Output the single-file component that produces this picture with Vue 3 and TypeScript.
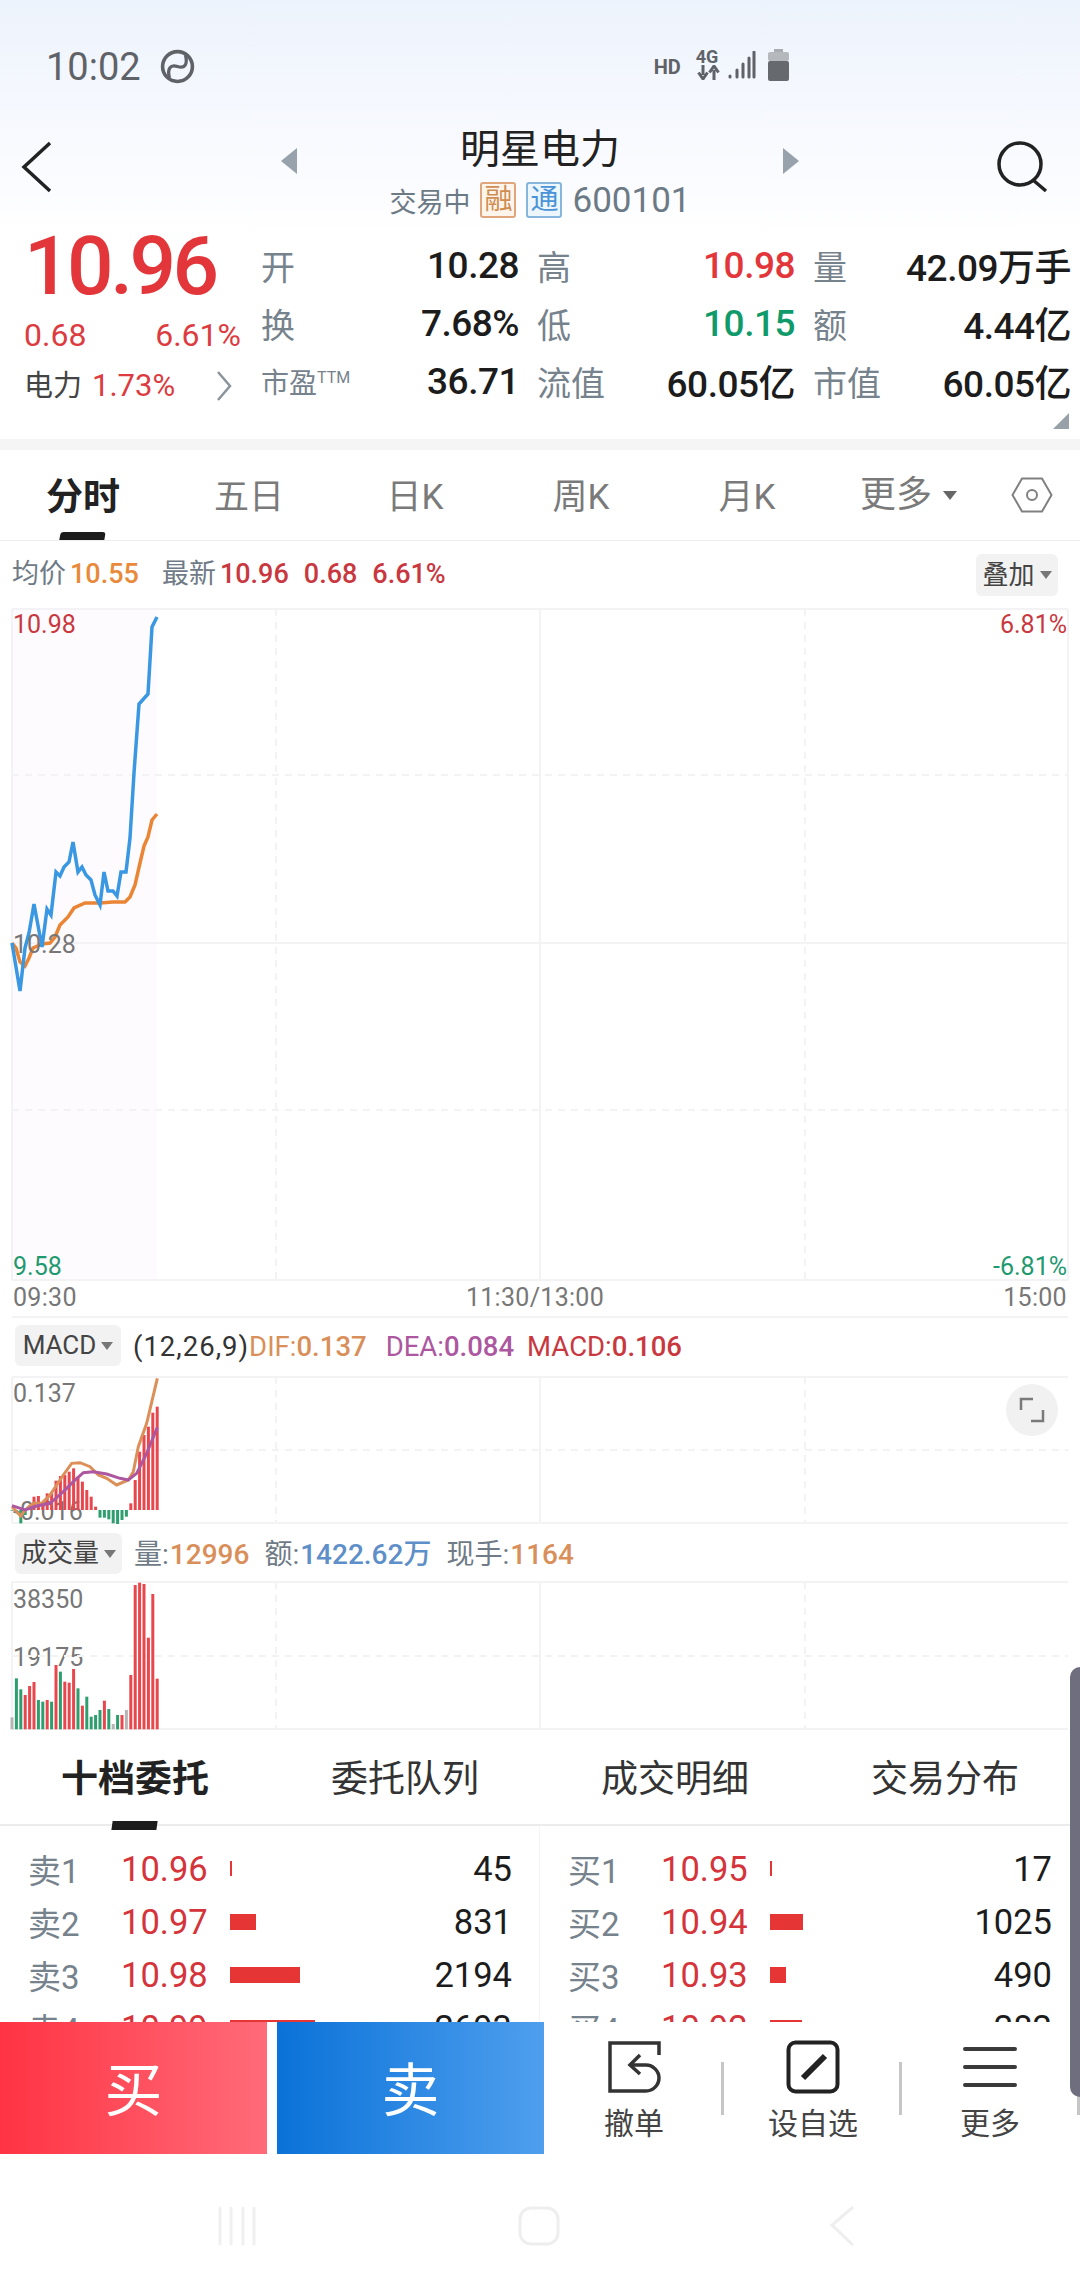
<template>
  <div class="page">
    <div class="hero">
      <div class="status">
        <span class="clock">10:02</span>
        <svg class="dnd" viewBox="0 0 34 34" width="35" height="35">
          <circle cx="17" cy="17" r="14.5" fill="none" stroke="#5f6368" stroke-width="3.5" />
          <path d="M4 21c4-9 9-10 13-4s9 5 13-4" transform="rotate(-38 17 17)" fill="none" stroke="#5f6368" stroke-width="3.2" />
        </svg>
        <div class="status-right">
          <span class="hd">HD</span>
          <div class="net">
            <span>4G</span>
            <svg viewBox="0 0 25 15" width="25" height="15">
              <path d="M7 0v10M2.5 7.5 7 14l4.500-6.500M18 15V5M13.500 7.500 18 1l4.500 6.500" fill="none" stroke="#5f6368" stroke-width="3" />
            </svg>
          </div>
          <svg class="signal" viewBox="0 0 28 28" width="28" height="28">
            <path d="M2 25v1M9 19v7M15 13v13M21 7v19M26 1v25" stroke="#5f6368" stroke-width="3" stroke-linecap="round" />
          </svg>
          <svg class="battery" viewBox="0 0 21 32" width="21" height="32">
            <rect x="6" y="0" width="9" height="4" fill="#a9adb2" />
            <rect x="0" y="3" width="21" height="9" rx="2" fill="#b5b8bc" />
            <rect x="0" y="12" width="21" height="20" rx="2" fill="#66696d" />
          </svg>
        </div>
      </div>

      <div class="nav">
        <svg class="back" viewBox="0 0 34 54" width="34" height="54">
          <path d="M30 3 4 27l26 24" fill="none" stroke="#222" stroke-width="3.500" />
        </svg>
        <div class="nav-mid">
          <i class="tri-left"></i>
          <div class="title-box">
            <div class="title">明星电力</div>
            <div class="subtitle">
              <span>交易中</span>
              <em class="tag tag-rong">融</em>
              <em class="tag tag-tong">通</em>
              <span class="code">600101</span>
            </div>
          </div>
          <i class="tri-right"></i>
        </div>
        <svg class="search" viewBox="0 0 56 54" width="56" height="54">
          <circle cx="25" cy="24" r="21" fill="none" stroke="#222" stroke-width="3.500" />
          <path d="m38 40 13 11" stroke="#222" stroke-width="3.500" />
        </svg>
      </div>

      <div class="stats">
        <div class="quote">
          <div class="price">10.96</div>
          <div class="change"><span>0.68</span><span>6.61%</span></div>
          <div class="sector">
            <span class="sector-name">电力</span>
            <span class="sector-val">1.73%</span>
            <svg viewBox="0 0 16 32" width="16" height="32">
              <path d="m2 2 12 14L2 30" fill="none" stroke="#8a949c" stroke-width="2.500" />
            </svg>
          </div>
        </div>
        <div class="stat-grid">
          <div v-for="s in stats" :key="s.label" class="stat">
            <span class="stat-label">{{ s.label }}<sup v-if="s.sup">{{ s.sup }}</sup></span>
            <span class="stat-val" :class="s.cls">{{ s.value }}</span>
          </div>
        </div>
        <i class="corner"></i>
      </div>
    </div>
    <div class="band"></div>

    <div class="tabs">
      <div v-for="(t, i) in tabs" :key="t" class="tab" :class="{ on: i === 0 }">{{ t }}</div>
      <div class="tab-more">更多<i class="caret"></i></div>
      <svg class="hex" viewBox="0 0 42 36" width="42" height="36">
        <path d="M11 1.500h20L40.500 18 31 34.500H11L1.500 18z" fill="none" stroke="#808080" stroke-width="2" />
        <circle cx="21" cy="18" r="5" fill="none" stroke="#808080" stroke-width="2" />
      </svg>
    </div>

    <div class="info-row">
      <span class="muted">均价</span><b class="orange">10.55</b>
      <span class="muted latest">最新</span><b class="red">10.96</b><b class="red">0.68</b><b class="red">6.61%</b>
      <div class="pill overlay-pill">叠加<i class="caret small"></i></div>
    </div>

    <div class="chart main-chart">
      <svg viewBox="0 605 1080 677" width="1080" height="677">
        <rect x="12" y="609" width="145" height="671" fill="#fefbfe" />
        <path d="M12 609h1056M12 943h1056M12 1280h1056M12 609v671M540 609v671M1068 609v671" stroke="#f3f3f5" stroke-width="2" fill="none" />
        <path d="M12 775h1056M12 1110h1056M276 609v671M805 609v671" stroke="#f3f3f3" stroke-width="2" stroke-dasharray="7 6" fill="none" />
        <polyline :points="pts(avgLine)" fill="none" stroke="#e98535" stroke-width="3.500" />
        <polyline :points="pts(priceLine)" fill="none" stroke="#3a97e2" stroke-width="3.500" />
      </svg>
      <span class="lbl red-lbl l-high">10.98</span>
      <span class="lbl l-base">10.28</span>
      <span class="lbl green-lbl l-low">9.58</span>
      <span class="lbl red-lbl r-high">6.81%</span>
      <span class="lbl green-lbl r-low">-6.81%</span>
    </div>
    <div class="axis">
      <span>09:30</span><span>11:30/13:00</span><span>15:00</span>
    </div>

    <div class="ind-row">
      <div class="pill ind-pill macd-pill">MACD<i class="caret small"></i></div>
      <span class="dark">(12,26,9)</span>
      <span class="c-dif">DIF:<b>0.137</b></span>
      <span class="c-dea">DEA:<b>0.084</b></span>
      <span class="c-macd">MACD:<b>0.106</b></span>
    </div>
    <div class="chart macd-chart">
      <span class="lbl m-top">0.137</span>
      <span class="lbl m-bot">-0.016</span>
      <svg viewBox="0 1374 1080 152" width="1080" height="152">
        <path d="M12 1377h1056M12 1523h1056M12 1377v146M540 1377v146" stroke="#f3f3f5" stroke-width="2" fill="none" />
        <path d="M12 1450h1056M276 1377v146M805 1377v146" stroke="#f3f3f3" stroke-width="2" stroke-dasharray="7 6" fill="none" />
        <rect v-for="b in macdBars" :key="b.x" :x="b.x - 1.500" :y="b.y" width="3" :height="b.h" :fill="b.color" />
        <polyline :points="pts(difLine)" fill="none" stroke="#dc8f58" stroke-width="3" />
        <polyline :points="pts(deaLine)" fill="none" stroke="#ac57a0" stroke-width="3" />
      </svg>
      <div class="expand">
        <svg viewBox="0 0 26 26" width="26" height="26">
          <path d="M2 13V2h12M24 13v11H12" fill="none" stroke="#7a7a7a" stroke-width="2.500" />
        </svg>
      </div>
    </div>

    <div class="ind-row vol-row">
      <div class="pill ind-pill vol-pill">成交量<i class="caret small"></i></div>
      <span class="muted">量:</span><b class="c-amt">12996</b>
      <span class="muted gap-l">额:</span><b class="c-blue">1422.62万</b>
      <span class="muted gap-l">现手:</span><b class="c-amt">1164</b>
    </div>
    <div class="chart vol-chart">
      <span class="lbl v-top">38350</span>
      <span class="lbl v-mid">19175</span>
      <svg viewBox="0 1579 1080 153" width="1080" height="153">
        <path d="M12 1582h1056M12 1729h1056M12 1582v147M540 1582v147" stroke="#f3f3f5" stroke-width="2" fill="none" />
        <path d="M12 1656h1056M276 1582v147M805 1582v147" stroke="#f3f3f3" stroke-width="2" stroke-dasharray="7 6" fill="none" />
        <rect v-for="b in volBars" :key="b.x" :x="b.x - 1.500" :y="b.y" width="3" :height="b.h" :fill="b.color" />
      </svg>
    </div>

    <div class="book-tabs">
      <div v-for="(t, i) in bookTabs" :key="t" class="book-tab" :class="{ on: i === 0 }">{{ t }}</div>
    </div>
    <div class="book">
      <div class="book-col">
        <div v-for="r in asks" :key="r.label" class="book-row">
          <span class="muted-lbl">{{ r.label }}</span>
          <span class="book-price">{{ r.price }}</span>
          <span class="bar-cell"><i :style="{ width: r.w + 'px', height: r.h + 'px' }"></i></span>
          <span class="book-qty">{{ r.qty }}</span>
        </div>
      </div>
      <div class="book-col right">
        <div v-for="r in bids" :key="r.label" class="book-row">
          <span class="muted-lbl">{{ r.label }}</span>
          <span class="book-price">{{ r.price }}</span>
          <span class="bar-cell"><i :style="{ width: r.w + 'px', height: r.h + 'px' }"></i></span>
          <span class="book-qty">{{ r.qty }}</span>
        </div>
      </div>
    </div>

    <div class="actions">
      <div class="btn buy">买</div>
      <div class="btn sell">卖</div>
      <div class="tools">
        <div class="tool">
          <svg viewBox="0 0 54 52" width="54" height="52">
            <path d="M52 14V2H3v48h36c7 0 13-6 13-13s-6-13-13-13H24" fill="none" stroke="#333" stroke-width="3.500" />
            <path d="m33 14-10 10 10 9" fill="none" stroke="#333" stroke-width="3.500" />
          </svg>
          <span>撤单</span>
        </div>
        <div class="tool">
          <svg viewBox="0 0 54 54" width="54" height="54">
            <rect x="2.500" y="2.500" width="49" height="49" rx="7" fill="none" stroke="#222" stroke-width="4" />
            <path d="M39 16 17 38" stroke="#222" stroke-width="6" />
          </svg>
          <span>设自选</span>
        </div>
        <div class="tool">
          <svg viewBox="0 0 54 54" width="54" height="54">
            <path d="M2 9h50M2 27h50M2 45h50" stroke="#3a3a3a" stroke-width="4" stroke-linecap="round" />
          </svg>
          <span>更多</span>
        </div>
      </div>
    </div>

    <div class="sysnav">
      <svg viewBox="0 0 40 40" width="40" height="40">
        <path d="M3 2v36M14 2v36M26 2v36M37 2v36" stroke="#f0f0f0" stroke-width="3" stroke-linecap="round" />
      </svg>
      <svg viewBox="0 0 42 40" width="42" height="40">
        <rect x="2" y="2" width="38" height="36" rx="11" fill="none" stroke="#eeeeee" stroke-width="3" />
      </svg>
      <svg viewBox="0 0 24 40" width="24" height="40">
        <path d="M23 1 2 19l21 20" fill="none" stroke="#eeeeee" stroke-width="3" />
      </svg>
    </div>

    <div class="scrollbar"></div>
  </div>
</template>

<script setup lang="ts">
type Pt = [number, number]

const stats = [
  { label: '开', value: '10.28' },
  { label: '高', value: '10.98', cls: 'up' },
  { label: '量', value: '42.09万手' },
  { label: '换', value: '7.68%' },
  { label: '低', value: '10.15', cls: 'down' },
  { label: '额', value: '4.44亿' },
  { label: '市盈', sup: 'TTM', value: '36.71' },
  { label: '流值', value: '60.05亿' },
  { label: '市值', value: '60.05亿' },
]

const tabs = ['分时', '五日', '日K', '周K', '月K']
const bookTabs = ['十档委托', '委托队列', '成交明细', '交易分布']

const asks = [
  { label: '卖1', price: '10.96', w: 2, h: 15, qty: '45' },
  { label: '卖2', price: '10.97', w: 26, h: 16, qty: '831' },
  { label: '卖3', price: '10.98', w: 70, h: 16, qty: '2194' },
  { label: '卖4', price: '10.99', w: 85, h: 16, qty: '2693' },
]
const bids = [
  { label: '买1', price: '10.95', w: 2, h: 15, qty: '17' },
  { label: '买2', price: '10.94', w: 33, h: 16, qty: '1025' },
  { label: '买3', price: '10.93', w: 16, h: 16, qty: '490' },
  { label: '买4', price: '10.92', w: 32, h: 16, qty: '282' },
]

const pts = (line: Pt[]) => line.map(p => p.join(',')).join(' ')

const priceLine: Pt[] = [
  [12, 943], [20, 991], [25, 948], [29, 933], [34, 904], [42, 947], [47, 909], [51, 915],
  [56, 872], [60, 876], [64, 867], [69, 862], [73, 842], [78, 872], [82, 867], [86, 875],
  [91, 880], [95, 895], [100, 905], [104, 872], [108, 891], [113, 891], [117, 896], [121, 872],
  [126, 872], [130, 838], [134, 773], [139, 704], [148, 694], [152, 627], [157, 617],
]
const avgLine: Pt[] = [
  [12, 943], [16, 948], [20, 962], [25, 966], [29, 958], [33, 948], [42, 944], [50, 943],
  [55, 937], [60, 925], [68, 917], [74, 908], [85, 903], [100, 903], [113, 902], [125, 902],
  [130, 897], [135, 885], [140, 863], [144, 846], [148, 837], [152, 820], [157, 814],
]

// zoomed-in readings of the indicator panes: x * 3, (y - 1340) * 3
const fromCrop = (list: Pt[]): Pt[] => list.map(([x, y]) => [x / 3, 1340 + y / 3])

const difLine = fromCrop([
  [36, 500], [50, 515], [62, 528], [75, 510], [100, 490], [125, 490], [150, 465], [170, 435],
  [190, 405], [215, 370], [240, 368], [270, 380], [295, 405], [320, 415], [350, 435], [385, 420],
  [400, 395], [415, 320], [440, 250], [472, 115],
])
const deaLine = fromCrop([
  [36, 497], [75, 510], [110, 498], [150, 490], [190, 455], [220, 425], [250, 398], [280, 395],
  [320, 402], [360, 415], [385, 420], [410, 400], [440, 340], [472, 262],
])

const barX = (i: number) => 12 + i * 4.4

const macdTops = [
  512, 520, 550, 525, 495, 470, 468, 490, 460, 460, 422, 408, 405, 395, 385, 410, 425, 450, 470, 500,
  533, 533, 538, 550, 552, 540, 530, 490, 420, 335, 285, 260, 218, 200,
]
const macdBars = macdTops.map((top, i) => {
  const zero = 1510
  const y = 1340 + top / 3
  return {
    x: barX(i),
    y: Math.min(y, zero),
    h: Math.abs(y - zero),
    color: y > zero ? '#2f9e6e' : '#e8484d',
  }
})

const R = '#e8484d'
const G = '#2f9e6e'
const N = '#b5b5b5'
const volData: [number, string][] = [
  [1132, N], [1015, G], [1048, G], [1065, R], [1038, R], [1026, R], [1080, G], [1085, G], [1080, R],
  [1085, G], [975, R], [995, G], [1025, R], [1028, R], [987, R], [1045, G], [1097, R], [1070, G],
  [1130, G], [1125, G], [1110, G], [1082, R], [1107, G], [1152, N], [1125, G], [1125, R], [1110, N],
  [1005, R], [735, R], [728, R], [732, R], [893, R], [762, R], [1016, R],
]
const volBars = volData.map(([top, color], i) => ({
  x: barX(i),
  y: 1340 + top / 3,
  h: (1168 - top) / 3,
  color,
}))
</script>

<style>
html,
body {
  margin: 0;
  background: #fff;
}
</style>

<style scoped>
.page {
  position: relative;
  width: 1080px;
  height: 2280px;
  overflow: hidden;
  background: #fff;
  font-family: Roboto, "Noto Sans CJK SC", sans-serif;
  color: #1c1c1c;
}

.hero {
  height: 439px;
  background: linear-gradient(180deg, #edf3fc 0, #f5f8fe 100px, #fbfcff 190px, #fff 235px);
}

.status {
  height: 130px;
  box-sizing: border-box;
  padding: 46px 0 0 46px;
  display: flex;
  align-items: flex-start;
}

.clock {
  font-size: 38px;
  line-height: 42px;
  color: #5f6368;
}

.dnd {
  margin: 3px 0 0 19px;
}

.status-right {
  margin-left: 459px;
  display: flex;
  align-items: flex-start;
  color: #5f6368;
}

.hd {
  font-size: 20px;
  font-weight: 700;
  line-height: 22px;
  margin-top: 10px;
  width: 42px;
}

.net {
  width: 32px;
  font-size: 18px;
  font-weight: 700;
  line-height: 16px;
  margin-top: 3px;
}

.net svg {
  display: block;
  margin-top: 0;
}

.signal {
  margin-top: 5px;
}

.battery {
  margin: 3px 0 0 12px;
}

.nav {
  height: 95px;
  position: relative;
  display: flex;
  justify-content: center;
}

.back {
  position: absolute;
  left: 20px;
  top: 10px;
}

.search {
  position: absolute;
  left: 995px;
  top: 10px;
}

.nav-mid {
  width: 518px;
  display: flex;
  justify-content: space-between;
  align-items: flex-start;
}

.tri-left,
.tri-right {
  display: block;
  width: 0;
  height: 0;
  margin-top: 18px;
  border-top: 13px solid transparent;
  border-bottom: 13px solid transparent;
}

.tri-left {
  border-right: 16px solid #97a2ad;
}

.tri-right {
  border-left: 16px solid #97a2ad;
}

.title-box {
  text-align: center;
}

.title {
  font-size: 40px;
  line-height: 40px;
  color: #222;
}

.subtitle {
  height: 40px;
  margin-top: 10px;
  display: flex;
  align-items: center;
  justify-content: center;
  font-size: 27px;
  color: #6c7a86;
}

.tag {
  width: 32px;
  height: 32px;
  margin-left: 10px;
  border: 2px solid;
  border-radius: 3px;
  font-style: normal;
  font-size: 28px;
  line-height: 32px;
  text-align: center;
}

.tag-rong {
  color: #d08d52;
  border-color: #dea67a;
  background: #fdf5ec;
}

.tag-tong {
  color: #4a94d6;
  border-color: #86b6dd;
  background: #edf5fd;
}

.code {
  font-size: 35px;
  margin-left: 10px;
}

.stats {
  position: relative;
  height: 214px;
  display: flex;
}

.quote {
  width: 261px;
  flex: none;
  box-sizing: border-box;
  padding-left: 24px;
}

.price {
  font-size: 82px;
  font-weight: 500;
  line-height: 76px;
  margin-top: 3px;
  letter-spacing: -3.5px;
  color: #e2363b;
}

.change {
  display: flex;
  justify-content: space-between;
  width: 217px;
  margin-top: 11px;
  font-size: 32px;
  line-height: 40px;
  color: #dc3c3f;
}

.sector {
  display: flex;
  align-items: center;
  margin-top: 9px;
  line-height: 44px;
}

.sector-name {
  font-size: 29px;
  color: #444;
  width: 68px;
}

.sector-val {
  font-size: 31px;
  color: #dc3c3f;
  width: 124px;
}

.stat-grid {
  display: grid;
  grid-template-columns: repeat(3, 258px);
  grid-auto-rows: 58px;
  column-gap: 18px;
  padding-top: 11px;
  height: 174px;
}

.stat {
  display: flex;
  justify-content: space-between;
  align-items: center;
}

.stat-label {
  font-size: 34px;
  color: #76828c;
  white-space: nowrap;
}

.stat-label sup {
  font-size: 16px;
  vertical-align: 10px;
  line-height: 0;
}

.stat:nth-child(7) .stat-label {
  font-size: 28px;
}

.stat-val {
  font-size: 37px;
  font-weight: 500;
  white-space: nowrap;
  letter-spacing: -0.5px;
}

.up {
  color: #e2363b;
}

.down {
  color: #109a6a;
}

.corner {
  position: absolute;
  left: 1053px;
  top: 188px;
  width: 0;
  height: 0;
  border-left: 16px solid transparent;
  border-bottom: 16px solid #98a1a9;
}

.band {
  height: 11px;
  background: #f5f5f5;
}

.tabs {
  position: relative;
  height: 90px;
  display: flex;
  border-bottom: 1px solid #eeeeee;
}

.tab {
  position: relative;
  width: 166px;
  text-align: center;
  font-size: 35px;
  line-height: 96px;
  color: #7a7a7a;
}

.tab.on {
  font-size: 37px;
  font-weight: 700;
  color: #222;
}

.tab.on::after {
  content: "";
  position: absolute;
  left: 60px;
  bottom: 0;
  width: 45px;
  height: 8px;
  background: #1c1c1c;
  border-radius: 3px 3px 0 0;
  transform: skewX(-10deg);
}

.tab-more {
  margin-left: 30px;
  font-size: 36px;
  line-height: 96px;
  color: #7a7a7a;
  display: flex;
  align-items: center;
}

.caret {
  display: block;
  width: 0;
  height: 0;
  margin-left: 11px;
  border-left: 7px solid transparent;
  border-right: 7px solid transparent;
  border-top: 9px solid #666;
}

.caret.small {
  margin-left: 5px;
  border-left-width: 6px;
  border-right-width: 6px;
  border-top: 8px solid #777;
}

.hex {
  position: absolute;
  left: 1011px;
  top: 27px;
}

.info-row {
  position: relative;
  height: 64px;
  box-sizing: border-box;
  padding: 13px 0 0 12px;
  display: flex;
  align-items: flex-start;
  font-size: 27px;
  line-height: 40px;
}

.info-row b {
  font-weight: 500;
  margin-left: 4px;
}

.info-row .red + .red {
  margin-left: 15px;
}

.muted {
  color: #6f7b86;
}

.latest {
  margin-left: 23px;
}

.orange {
  color: #e98a3a;
}

.red {
  color: #c9383f;
}

.pill {
  background: #f2f2f2;
  border-radius: 6px;
  display: flex;
  align-items: center;
  justify-content: center;
  color: #444;
  font-size: 26px;
}

.overlay-pill {
  position: absolute;
  left: 976px;
  top: 13px;
  width: 82px;
  height: 42px;
}

.chart {
  position: relative;
}

.chart svg {
  position: absolute;
  left: 0;
  top: 0;
}

.main-chart {
  height: 677px;
}

.macd-chart {
  height: 152px;
}

.vol-chart {
  height: 153px;
}

.lbl {
  position: absolute;
  font-size: 25px;
  line-height: 28px;
  color: #777;
}

.red-lbl {
  color: #c9383f;
}

.green-lbl {
  color: #1f9a70;
}

.l-high {
  left: 13px;
  top: 6px;
}

.l-base {
  left: 13px;
  top: 326px;
}

.l-low {
  left: 13px;
  top: 648px;
}

.r-high {
  right: 13px;
  top: 6px;
}

.r-low {
  right: 13px;
  top: 648px;
}

.axis {
  height: 34px;
  margin: 0 12px;
  display: flex;
  justify-content: space-between;
  border-bottom: 2px solid #f3f3f5;
  font-size: 25px;
  letter-spacing: 0.3px;
  line-height: 32px;
  color: #777;
  padding: 0 1px;
}

.axis span:nth-child(2) {
  margin-right: 10px;
}

.ind-row {
  height: 56px;
  box-sizing: border-box;
  padding: 7px 0 0 15px;
  display: flex;
  align-items: flex-start;
  font-size: 27.5px;
  line-height: 43px;
}

.ind-row b {
  font-weight: 500;
}

.ind-pill {
  height: 41px;
  margin-right: 12px;
}

.macd-pill {
  width: 106px;
}

.vol-pill {
  width: 107px;
}

.dark {
  color: #333;
  letter-spacing: 1px;
}

.c-dif {
  color: #d98f5a;
}

.c-dea {
  color: #ac57a0;
  margin-left: 19px;
}

.c-macd {
  color: #c9383f;
  margin-left: 13px;
}

.vol-row {
  height: 53px;
  font-size: 28px;
}

.vol-row .pill {
  font-size: 26px;
}

.vol-row b {
  margin-left: 1px;
}

.c-amt {
  color: #d98f5a;
}

.c-blue {
  color: #5e8fc8;
}

.gap-l {
  margin-left: 15px;
}

.m-top {
  left: 13px;
  top: 6px;
}

.m-bot {
  left: 13px;
  top: 124px;
}

.v-top {
  left: 13px;
  top: 7px;
}

.v-mid {
  left: 13px;
  top: 65px;
}

.expand {
  position: absolute;
  left: 1006px;
  top: 10px;
  width: 52px;
  height: 52px;
  border-radius: 50%;
  background: #f1f1f1;
  display: flex;
  align-items: center;
  justify-content: center;
}

.expand svg {
  position: static;
}

.book-tabs {
  height: 92px;
  display: grid;
  grid-template-columns: repeat(4, 270px);
  border-bottom: 2px solid #ececec;
  box-sizing: content-box;
}

.book-tab {
  position: relative;
  text-align: center;
  font-size: 37px;
  line-height: 96px;
  color: #333;
}

.book-tab.on {
  font-weight: 700;
  color: #222;
}

.book-tab.on::after {
  content: "";
  position: absolute;
  left: 112px;
  bottom: -2px;
  width: 45px;
  height: 9px;
  background: #1c1c1c;
  transform: skewX(-8deg);
}

.book {
  height: 196px;
  overflow: hidden;
  display: grid;
  grid-template-columns: 540px 540px;
}

.book-col {
  padding-top: 16px;
}

.book-col.right {
  border-left: 1px solid #f4f4f4;
  margin-left: -1px;
}

.book-row {
  height: 53px;
  box-sizing: border-box;
  padding: 0 28px;
  display: grid;
  grid-template-columns: 93px 109px 1fr auto;
  align-items: center;
}

.muted-lbl {
  font-size: 33px;
  color: #76828c;
}

.book-price {
  font-size: 34.500px;
  color: #d4343a;
}

.bar-cell {
  display: flex;
  align-items: center;
}

.bar-cell i {
  display: block;
  background: #e53535;
}

.book-qty {
  font-size: 34.500px;
  color: #1c1c1c;
}

.actions {
  position: relative;
  height: 132px;
  display: flex;
  background: #fff;
}

.btn {
  width: 267px;
  box-sizing: border-box;
  padding-top: 7px;
  text-align: center;
  color: #fff;
  font-size: 58px;
  line-height: 125px;
}

.buy {
  background: linear-gradient(90deg, #ff3343, #ff6b79);
}

.sell {
  margin-left: 10px;
  background: linear-gradient(90deg, #0a72d8, #4f9fee);
}

.tools {
  display: grid;
  grid-template-columns: 180px 178px 176px;
}

.tool {
  position: relative;
  display: flex;
  flex-direction: column;
  align-items: center;
  padding-top: 18px;
  font-size: 30px;
  line-height: 36px;
  color: #444;
}

.tool svg {
  height: 54px;
  margin-bottom: 12px;
}

.tool + .tool::before {
  content: "";
  position: absolute;
  left: -3px;
  top: 40px;
  width: 3px;
  height: 53px;
  background: #c6c6c6;
}

.tool:last-child::after {
  content: "";
  position: absolute;
  left: 175px;
  top: 40px;
  width: 3px;
  height: 53px;
  background: #c6c6c6;
}

.sysnav {
  position: relative;
  height: 126px;
}

.sysnav svg {
  position: absolute;
  top: 52px;
}

.sysnav svg:nth-child(1) {
  left: 217px;
}

.sysnav svg:nth-child(2) {
  left: 518px;
}

.sysnav svg:nth-child(3) {
  left: 830px;
}

.scrollbar {
  position: absolute;
  left: 1070px;
  top: 1667px;
  width: 10px;
  height: 430px;
  background: #6f6e7e;
  border-radius: 14px 0 0 14px;
}
</style>
